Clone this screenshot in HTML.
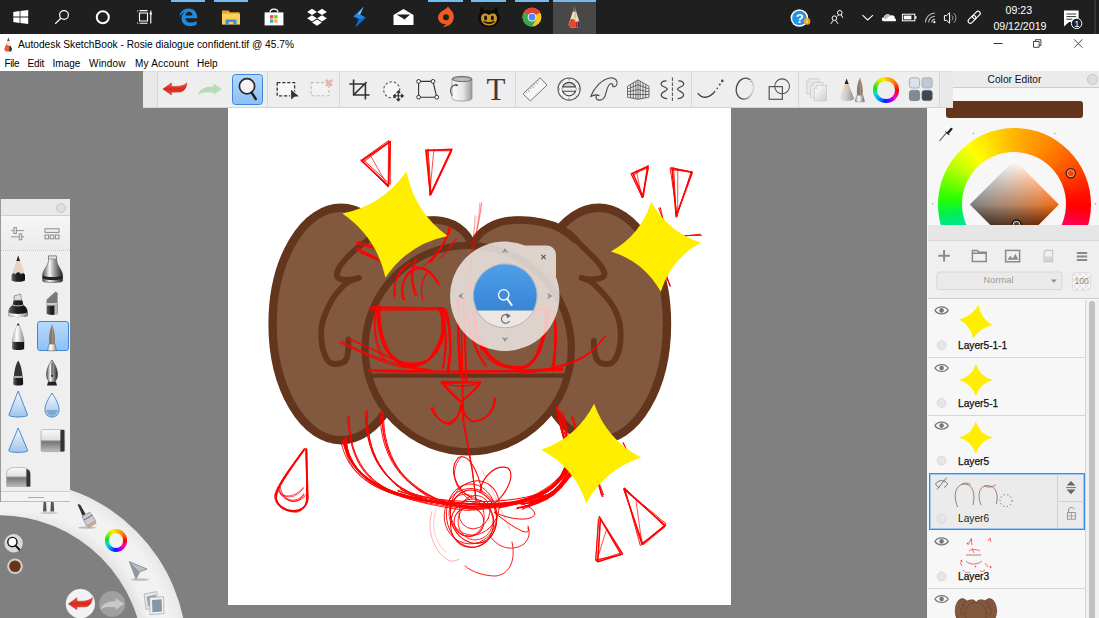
<!DOCTYPE html>
<html>
<head>
<meta charset="utf-8">
<title>Autodesk SketchBook</title>
<style>
*{box-sizing:border-box;margin:0;padding:0}
html,body{width:1099px;height:618px;overflow:hidden;background:#808080;font-family:"Liberation Sans",sans-serif;}
.abs{position:absolute}
svg{position:absolute;overflow:visible}
#taskbar{position:absolute;left:0;top:0;width:1099px;height:34px;background:#1f1f1f;overflow:hidden}
#titlebar{position:absolute;left:0;top:34px;width:1099px;height:20px;background:#fff}
#menubar{position:absolute;left:0;top:54px;width:1099px;height:17px;background:#fff}
.t{position:absolute;white-space:nowrap;color:#000;line-height:1}
.ind{position:absolute;top:0;height:2px;background:#76b9ed}
#toolbar{position:absolute;left:143px;top:71px;width:810px;height:37px;background:#eeeeee;border-bottom:1px solid #d4d4d4;border-top:1px solid #dcdcdc;z-index:5}
.sep{position:absolute;top:0;width:1px;height:35px;background:#d6d6d6}
#canvas{position:absolute;left:228px;top:108px;width:503px;height:497px;background:#fff;overflow:hidden}
#lpanel{position:absolute;left:0;top:199px;width:70px;height:303px;background:#efefef;border-left:1px solid #9a9a9a;z-index:4}
#rpanel{position:absolute;left:927px;top:71px;width:172px;height:547px;background:#f7f7f7;border-left:1px solid #f4f4f4;overflow:hidden}
</style>
</head>
<body>
<!--TASKBAR-->
<div id="taskbar">
<div class="abs" style="left:553px;top:0;width:43px;height:34px;background:#484848"></div>
<div class="ind" style="left:171px;width:34px"></div>
<div class="ind" style="left:214px;width:34px"></div>
<div class="ind" style="left:428px;width:35px"></div>
<div class="ind" style="left:471px;width:35px"></div>
<div class="ind" style="left:515px;width:34px"></div>
<div class="ind" style="left:553px;width:43px"></div>
<svg style="left:0;top:0" width="1099" height="34" viewBox="0 0 1099 34">
<!-- windows -->
<path d="M13.3,12 L19.6,11.1 L19.6,16.6 L13.3,16.6 Z M20.4,11 L28.2,10 L28.2,16.6 L20.4,16.6 Z M13.3,17.4 L19.6,17.4 L19.6,22.9 L13.3,22 Z M20.4,17.4 L28.2,17.4 L28.2,24 L20.4,23 Z" fill="#fff"/>
<!-- search -->
<circle cx="64" cy="15" r="4.4" fill="none" stroke="#fff" stroke-width="1.2"/>
<path d="M60.9,18.3 L55.2,23.7" stroke="#fff" stroke-width="1.2"/>
<!-- cortana -->
<circle cx="102.8" cy="17.2" r="6" fill="none" stroke="#fff" stroke-width="2"/>
<!-- task view -->
<path d="M139.5,13 h8 v8 h-8 z M137,11 h1.2 M137,23 h1.2 M139.5,10.6 h8 M139.5,23.3 h8 M150.8,10.5 v13" fill="none" stroke="#fff" stroke-width="1.1"/>
<circle cx="150.8" cy="13.6" r="1.2" fill="#fff"/>
<!-- edge -->
<path d="M179.5,17.2 C179.8,11.5 184,8.6 188.6,8.6 C194,8.6 197.3,12.4 197.2,18.2 L185.4,18.2 C185.6,21.2 188,22.6 191,22.6 C193,22.6 195,22 196.6,21 L196.6,24.6 C194.8,25.6 192.6,26.2 190,26.2 C184.6,26.2 181.4,22.6 181.6,18 C181.8,15 183.4,12.8 185.6,11.6 C182.6,12.4 180.6,14.6 179.5,17.2 Z M185.5,15.4 L192.4,15.4 C192.4,13.2 191,11.8 189,11.8 C187,11.8 185.8,13.2 185.5,15.4 Z" fill="#1e8be0"/>
<!-- explorer -->
<path d="M222,10.5 h6.5 l1.5,1.8 h9.5 v2.4 h-17.5 z" fill="#e9a822"/>
<rect x="222" y="13.6" width="18" height="11" fill="#fbd05b"/>
<path d="M225.5,24.6 v-5 h11 v5 h-3.2 v-2.6 h-4.6 v2.6 z" fill="#3c8fdd"/>
<!-- store -->
<path d="M270,12.5 C270,8 278,8 278,12.5" fill="none" stroke="#fff" stroke-width="1.2"/>
<rect x="264.6" y="12.4" width="18.8" height="13" fill="#fff"/>
<rect x="270" y="15.2" width="3.3" height="3.3" fill="#e74c2e"/><rect x="274.2" y="15.2" width="3.3" height="3.3" fill="#7cba2b"/>
<rect x="270" y="19.4" width="3.3" height="3.3" fill="#2fa3ea"/><rect x="274.2" y="19.4" width="3.3" height="3.3" fill="#f7b81f"/>
<!-- dropbox -->
<g fill="#fff"><path d="M312,8.8 l4.9,3.1 l-4.9,3.1 l-4.9,-3.1 z M322,8.8 l4.9,3.1 l-4.9,3.1 l-4.9,-3.1 z M312,15.2 l4.9,3.1 l-4.9,3.1 l-4.9,-3.1 z M322,15.2 l4.9,3.1 l-4.9,3.1 l-4.9,-3.1 z M317,19.5 l4.9,3.1 l-4.9,3.1 l-4.9,-3.1 z"/></g>
<!-- blue S -->
<path d="M363.6,6.8 L353.4,16.4 L359,19 L355.4,27.3 L365.6,17.4 L360,14.6 Z" fill="#1f86ea"/>
<path d="M363.6,6.8 L358,14 L360,14.6 Z" fill="#8fd0ff"/>
<path d="M359,19 L365.6,17.4 L355.4,27.3 Z" fill="#1468c8"/>
<!-- mail -->
<path d="M393.5,15 L403.5,9 L413.5,15 L413.5,25 L393.5,25 Z" fill="#fff"/>
<path d="M396.5,14.6 L410,14.6 L404.5,19.6 L410.5,23 Z" fill="#1f1f1f"/>
<!-- origin -->
<path d="M448,6.6 C446.5,9 444,10 441.6,11.4 C438.4,13.2 437.4,17 438.6,20 C439.8,23 443,24.6 446,24 C444.6,25.4 443.6,26.4 442.6,27 C448,27 453.4,23.4 453.8,17.6 C454.2,12.2 450.4,10.2 448,6.6 Z" fill="#f05a22"/>
<circle cx="446" cy="17.2" r="3" fill="#1f1f1f"/>
<!-- bendy -->
<path d="M480.4,12.4 C479,8.6 480.6,7 482.4,7 C483,9.4 484.6,10.4 486,10.4 L492,10.4 C493.4,10.4 495,9.4 495.6,7 C497.4,7 499,8.6 497.6,12.4 C499,14.4 499.6,16.4 499.6,18.4 C499.6,23.6 495.2,26.9 489,26.9 C482.8,26.9 478.4,23.6 478.4,18.4 C478.4,16.4 479,14.4 480.4,12.4 Z" fill="#0d0a07"/>
<path d="M482,15 C484,12.6 487,13.6 489,15 C491,13.6 494,12.6 496,15 C498,18 497,22.6 493,24.8 C490.6,25.8 487.4,25.8 485,24.8 C481,22.6 480,18 482,15 Z" fill="#c9982c"/>
<ellipse cx="485.6" cy="18" rx="1.5" ry="2.4" fill="#1a1206"/><ellipse cx="492.4" cy="18" rx="1.5" ry="2.4" fill="#1a1206"/>
<path d="M483.4,21.6 Q489,25.8 494.6,21.6 Q489,23.6 483.4,21.6 Z" fill="#1a1206" stroke="#1a1206" stroke-width="0.8"/>
<!-- chrome -->
<circle cx="532" cy="17.2" r="9.4" fill="#f7c720"/>
<path d="M532,17.2 L523.9,12.5 A9.4,9.4 0 0 1 540.1,12.5 Z" fill="#e04435"/>
<path d="M532,17.2 L523.9,12.5 A9.4,9.4 0 0 0 532,26.6 L536.2,19.6 Z" fill="#35a853" />
<path d="M523.9,12.5 A9.4,9.4 0 0 1 540.1,12.5 L532,12.5 Z" fill="#e04435"/>
<circle cx="532" cy="17.2" r="4.3" fill="#fff"/><circle cx="532" cy="17.2" r="3.4" fill="#4a8af4"/>
<!-- sketchbook -->
<path d="M574.4,6.6 L580.4,24.4 L578.6,27.4 L570.4,27.4 L568.6,24.4 Z" fill="#f1dfc2"/>
<path d="M574.4,6.6 L576.6,13 L574.4,27.4 Z" fill="#d8c19e"/>
<path d="M574.4,6.6 L576,11.4 L572.8,11.4 Z" fill="#555"/>
<path d="M570.6,19.4 L568.6,24.4 L570.4,27.4 L575.4,27.4 L575.4,21 C574,19 572,18.6 570.6,19.4 Z" fill="#e2482a"/>
<path d="M575.4,22 L577.4,21.4 L577.6,27.4 L575.4,27.4 Z" fill="#b8241c"/>
<path d="M577.6,21 L579.4,21.6 L580.4,24.4 L578.6,27.4 L577.6,27.4 Z" fill="#2e3b4e"/>
<!-- tray -->
<circle cx="799.4" cy="18" r="8.8" fill="#fff"/><circle cx="799.4" cy="18" r="7.3" fill="#2492e6"/>
<text x="795.7" y="22.8" font-family="Liberation Sans" font-weight="bold" font-size="13" fill="#fff">?</text>
<circle cx="807" cy="21.4" r="3.3" fill="#f0a020"/><rect x="806.6" y="19.4" width="0.9" height="0.9" fill="#fff"/><rect x="806.6" y="20.8" width="0.9" height="2.4" fill="#fff"/>
<!-- people -->
<g fill="none" stroke="#fff" stroke-width="1"><circle cx="834.4" cy="18.2" r="2.3"/><path d="M830.8,23.8 L833.2,20.4 M838,23.8 L835.6,20.4"/><circle cx="839.8" cy="12.8" r="2.3"/><path d="M841.2,14.8 L842.8,17.8 M838.4,14.8 L837.4,16.4"/></g>
<!-- chevron -->
<path d="M862.5,15.1 L867.7,19.9 L873,15.1" fill="none" stroke="#fff" stroke-width="1.1"/>
<!-- cloud -->
<path d="M884.5,21.3 C881.2,21.3 881,17.6 884,17.2 C884.4,14.2 888.6,13.2 890.2,15.6 C893,14.4 895.4,16.6 894.8,18.4 C896.6,18.6 896.4,21.3 894.6,21.3 Z" fill="#fff"/>
<path d="M884,17.2 C884.4,14.2 888.6,13.2 890.2,15.6 L885,20 Z" fill="#bdbdbd"/>
<!-- battery -->
<rect x="902.4" y="14.2" width="12.4" height="6.6" fill="none" stroke="#fff" stroke-width="1"/><rect x="903.8" y="15.6" width="7.6" height="3.8" fill="#fff"/><rect x="915.2" y="16" width="1.2" height="3" fill="#fff"/>
<!-- wifi -->
<g fill="none" stroke="#b5b5b5" stroke-width="1.1"><path d="M931.8,22.6 A3.2,3.2 0 0 1 935,19.4"/><path d="M928.6,22.6 A6.4,6.4 0 0 1 935,16.2"/><path d="M925.4,22.6 A9.6,9.6 0 0 1 935,13"/></g>
<circle cx="934.4" cy="22.2" r="1.1" fill="#fff"/>
<!-- volume -->
<path d="M944.4,15.6 h2.2 l3,-2.8 v10.4 l-3,-2.8 h-2.2 z" fill="none" stroke="#fff" stroke-width="1"/>
<path d="M951.8,15.4 A3.4,3.4 0 0 1 951.8,20.6 M953.8,13.2 A6.4,6.4 0 0 1 953.8,22.8" fill="none" stroke="#aaa" stroke-width="0.9"/>
<!-- link -->
<g fill="none" stroke="#fff" stroke-width="1.1" transform="rotate(-45 974.2 17.2)"><rect x="966.6" y="15" width="9" height="4.4" rx="2.2"/><rect x="972.8" y="15" width="9" height="4.4" rx="2.2"/></g>
<!-- notif -->
<path d="M1064,10.6 h14.6 v11.4 h-9.6 l-5,4.4 z" fill="#fff"/>
<path d="M1066.4,14 h9.8 M1066.4,16.6 h9.8 M1066.4,19.2 h6" stroke="#1f1f1f" stroke-width="0.9"/>
<circle cx="1076.6" cy="23.4" r="5.2" fill="#1f1f1f" stroke="#fff" stroke-width="1"/>
<text x="1074.2" y="26.8" font-family="Liberation Sans" font-size="9.4" fill="#fff">1</text>
<rect x="1094.6" y="0" width="1" height="34" fill="#4a4a4a"/>
</svg>
<div class="t" style="left:1005.6px;top:5px;color:#fff;font-size:10.6px">09:23</div>
<div class="t" style="left:993.4px;top:20.6px;color:#fff;font-size:10.6px">09/12/2019</div>
</div>
<!--TITLE-->
<div id="titlebar">
<svg style="left:0;top:0" width="20" height="20" viewBox="0 34 20 20">
<path d="M8.2,37.2 L12,49 L10.8,51.2 L5.4,51.2 L4.2,49 Z" fill="#f3e3c6"/>
<path d="M8.4,37.4 L9.6,41 L7.2,41 Z" fill="#444"/>
<path d="M6.2,44.6 L4.2,49 L5.4,51.4 L8.4,51.4 L8.4,45.2 Z" fill="#e8602a"/>
<path d="M8.4,46 L10.6,46 L12,49 L10.8,51.4 L8.4,51.4 Z" fill="#c42a1c"/>
<path d="M10,45.4 L12,49 L11,51.2 L9.6,51.2 Z" fill="#2e3b4c"/>
</svg>
<div class="t" style="left:18px;top:5.6px;font-size:10.2px">Autodesk SketchBook - Rosie dialogue confident.tif @ 45.7%</div>
<svg style="left:980px;top:0" width="119" height="20" viewBox="980 34 119 20">
<path d="M993.5,43.5 h9" stroke="#333" stroke-width="1"/>
<path d="M1033.5,41.5 h5.6 v5.8 h-5.6 z M1035.3,41.5 v-1.8 h5.6 v5.8 h-1.8" fill="none" stroke="#333" stroke-width="0.9"/>
<path d="M1074.2,39.4 L1082.4,47.7 M1082.4,39.4 L1074.2,47.7" stroke="#333" stroke-width="0.9"/>
</svg>
</div>
<div id="menubar">
<div class="t" style="left:4.4px;top:4.9px;font-size:10px;letter-spacing:-0.3px">File</div>
<div class="t" style="left:27.6px;top:4.9px;font-size:10px;letter-spacing:-0.2px">Edit</div>
<div class="t" style="left:52.6px;top:4.9px;font-size:10px">Image</div>
<div class="t" style="left:89px;top:4.9px;font-size:10px;letter-spacing:0.2px">Window</div>
<div class="t" style="left:135px;top:4.9px;font-size:10px;letter-spacing:0.2px">My Account</div>
<div class="t" style="left:197px;top:4.9px;font-size:10px">Help</div>
</div>
<!--CANVAS-->
<div id="canvas"><svg style="left:0;top:0" width="503" height="497" viewBox="228 108 503 497">
<g fill="#82583f" stroke="#63351c" stroke-width="8.4" stroke-linecap="round" stroke-linejoin="round">
<ellipse cx="341" cy="324" rx="68.4" ry="116.3"/>
<ellipse cx="598.6" cy="324" rx="68.4" ry="116.3"/>
<path stroke="none" d="M352,252 C375,232 405,219 434,219 C452,219 466,228 472.5,245 C478,228 496,219 518,219 C545,219 566,232 584,250 L560,320 L380,320 Z"/>
<path fill="none" stroke-width="5.8" d="M472.5,245 C468,230 452,219.5 434,219.5 C404,219.5 374,233 354.5,250.3 C347,257 338,266 336.7,274 C336,281 348,281 359,278 C352,280 347,282 345.3,284 C338,291 333,297 330.5,302.6 C325,313 321.5,322 321.3,330.3 C321,339 321.5,346 323.8,351.8 C326,360 330,364 334.5,364 C341,364 345.5,362 346.8,358 C348.5,352 348.6,346 348.4,339.5"/>
<path fill="none" stroke-width="5.8" d="M472.5,245 C477,230 496,219.5 518,219.5 C537,219.5 551,223 561.5,228.8 C568,232.5 575,238.5 580,244.2 C586,250 592,255.5 596.9,261 C600.5,265 603.5,269.5 604.5,273.4 C605.5,279 592,281 581.5,278 C587,279.5 591,281.5 593.8,284 C600,290 606,296 610.7,302.6 C616.5,311 620,321 620.5,330.3 C621,339 620.5,346 618.4,351.8 C616,360 612,364 607.6,364 C602,364 598.5,363 596.9,359.5 C594.5,354 593.6,347 593.8,341"/>
<path fill="none" stroke-width="7.6" d="M370,238.6 C390,226 412,220 434,220 C452,220 467,230 472.5,246 C478,230 496,220 518,220 C537,220 551,223.4 561.5,229.2 C566,231.8 571,235.4 575,239.4"/>
<circle cx="468.2" cy="348.6" r="103.2" stroke-width="7.2"/>
<path fill="none" stroke-width="4.2" stroke-linecap="butt" d="M367,375.6 L569.5,375.6"/>
</g>
<g fill="none" stroke="#ff0000" stroke-linecap="round" stroke-linejoin="round">
<path d="M362.1,160.5 L390.2,141.5 L388.5,185.8 L361.8,160.9" stroke-width="1.6" opacity="1.0"/>
<path d="M360.6,160.7 L388.5,140.5 L388.2,187.2 L360.9,159.9" stroke-width="0.9" opacity="1.0"/>
<path d="M362.8,162.5 L390.3,141.6 L390.2,184.4 L363.6,160.1" stroke-width="0.9" opacity="1.0"/>
<path d="M369.9,154.5 L388.1,186.6" stroke-width="0.7" opacity="1.0"/>
<path d="M426.0,150.5 L451.9,149.2 L430.4,194.9 L425.9,150.0" stroke-width="1.6" opacity="1.0"/>
<path d="M427.0,150.1 L451.0,149.7 L430.1,194.7 L427.5,151.1" stroke-width="0.9" opacity="1.0"/>
<path d="M425.5,150.7 L451.8,150.8 L431.1,194.6 L428.1,149.0" stroke-width="0.9" opacity="1.0"/>
<path d="M433.8,150.6 L429.6,195.4" stroke-width="0.7" opacity="1.0"/>
<path d="M632.1,173.6 L647.6,166.4 L643.1,196.8 L632.9,173.5" stroke-width="1.6" opacity="1.0"/>
<path d="M633.0,173.2 L648.5,167.9 L642.5,197.6 L631.1,174.1" stroke-width="0.9" opacity="1.0"/>
<path d="M633.2,175.2 L648.5,165.5 L642.2,197.6 L631.0,173.3" stroke-width="0.9" opacity="1.0"/>
<path d="M636.4,170.5 L641.7,197.5" stroke-width="0.7" opacity="1.0"/>
<path d="M671.6,168.3 L692.2,172.4 L676.2,215.9 L672.1,169.1" stroke-width="1.6" opacity="1.0"/>
<path d="M673.1,169.9 L691.5,171.7 L676.2,217.4 L673.6,167.3" stroke-width="0.9" opacity="1.0"/>
<path d="M670.8,167.6 L691.3,171.9 L677.0,215.1 L670.2,168.3" stroke-width="0.9" opacity="1.0"/>
<path d="M677.8,169.8 L677.6,216.4" stroke-width="0.7" opacity="1.0"/>
<path d="M600.0,518.1 L622.5,553.9 L597.7,561.8 L600.4,518.4" stroke-width="1.6" opacity="1.0"/>
<path d="M599.6,517.6 L620.9,554.9 L595.6,559.9 L599.0,516.8" stroke-width="0.9" opacity="1.0"/>
<path d="M599.4,516.4 L620.5,553.1 L595.8,561.0 L598.3,519.3" stroke-width="0.9" opacity="1.0"/>
<path d="M606.9,528.2 L596.7,561.2" stroke-width="0.7" opacity="1.0"/>
<path d="M624.4,489.1 L665.3,525.6 L642.0,544.0 L624.1,489.1" stroke-width="1.6" opacity="1.0"/>
<path d="M624.0,488.8 L666.1,523.8 L640.3,545.6 L624.7,488.3" stroke-width="0.9" opacity="1.0"/>
<path d="M624.8,487.9 L665.0,526.7 L643.3,544.7 L623.7,489.1" stroke-width="0.9" opacity="1.0"/>
<path d="M636.0,500.8 L642.1,544.6" stroke-width="0.7" opacity="1.0"/>
<path d="M304.3,449.1 C295.4,463.6 279.4,482.4 276.0,495.1 C274.7,505.0 285.8,511.4 295.4,510.7 C302.7,510.2 307.5,504.9 307.5,498.6 L306.5,449.2" stroke-width="1.4" opacity="1.0"/>
<path d="M304.2,449.1 C294.6,462.6 279.1,482.5 276.0,494.8 C275.2,505.4 285.5,512.2 296.5,511.3 C303.3,510.0 306.6,505.3 306.8,498.4 L306.6,449.3" stroke-width="1.4" opacity="1.0"/>
<path d="M304.2,450.8 C295.7,461.9 277.8,480.9 276.9,495.8 C273.9,506.0 287.5,512.5 295.5,511.2 C301.8,508.4 308.5,505.5 307.1,499.4 L305.8,450.6" stroke-width="0.8" opacity="1.0"/>
<path d="M305.5,448.5 C294.2,462.3 278.2,482.3 274.8,494.5 C273.8,506.3 285.5,511.9 296.3,512.3 C302.7,511.3 307.0,505.1 307.1,496.5 L305.8,448.4" stroke-width="0.8" opacity="1.0"/>
<path d="M302.9,450.4 C294.0,462.9 279.7,482.2 275.0,494.9 C275.2,505.9 284.7,512.2 295.2,510.3 C303.9,510.0 307.2,505.8 308.3,497.8 L306.4,449.4" stroke-width="0.8" opacity="1.0"/>
<path d="M279.0,488.6 C281.8,500.1 295.9,507.4 305.6,495.2" stroke-width="0.8" opacity="1.0"/>
<path d="M280.4,487.2 C282.2,501.4 297.1,504.8 303.8,493.8" stroke-width="0.8" opacity="1.0"/>
<path d="M277.6,487.2 C280.6,500.5 296.9,507.3 303.9,494.7" stroke-width="0.8" opacity="1.0"/>
<path d="M278.5,490.9 C285.1,499.4 295.2,499.4 303.7,488.0" stroke-width="0.7" opacity="1.0"/>
<path d="M279.5,493.0 C283.0,497.8 296.0,497.5 303.1,487.5" stroke-width="0.7" opacity="1.0"/>
<path d="M371.7,307.0 L443.2,307.8" stroke-width="1.3" opacity="1.0"/>
<path d="M369.5,308.0 L443.4,308.0" stroke-width="1.3" opacity="1.0"/>
<path d="M369.6,310.1 L443.9,309.5" stroke-width="1.3" opacity="1.0"/>
<path d="M377.2,306.2 C378.1,322.6 380.5,335.3 385.8,348.4 C391.6,357.5 399.3,365.8 411.1,365.8 C423.2,364.1 432.4,358.9 435.1,351.9 C441.3,342.6 443.2,333.7 442.1,325.2 C442.9,317.7 442.1,313.9 439.1,308.3" stroke-width="1.7" opacity="1.0"/>
<path d="M378.1,306.2 C378.2,321.3 380.1,335.4 385.6,347.2 C391.5,357.6 400.0,364.4 410.7,364.4 C423.5,364.0 432.5,359.1 435.4,350.9 C441.9,341.2 444.6,332.9 443.0,325.2 C442.8,318.0 442.4,314.0 439.3,309.7" stroke-width="1.7" opacity="1.0"/>
<path d="M378.4,307.0 C378.8,321.7 380.1,335.3 385.1,348.1 C390.5,357.3 399.2,365.7 411.7,365.7 C423.6,364.5 431.6,358.9 435.3,350.9 C440.5,342.9 444.9,333.1 442.5,325.4 C442.6,317.7 441.0,312.8 439.5,309.0" stroke-width="1.7" opacity="1.0"/>
<path d="M376.4,306.7 C376.4,320.8 378.9,335.5 383.6,345.1 C390.0,356.6 400.4,365.2 412.3,366.2 C425.1,367.0 431.4,358.1 438.5,349.2 C442.2,342.7 441.6,334.7 445.0,325.2 C444.2,319.6 440.1,313.1 439.6,310.7" stroke-width="1.0" opacity="1.0"/>
<path d="M379.6,308.4 C379.4,324.0 382.0,337.0 384.6,345.2 C389.1,357.3 397.9,366.7 411.3,366.1 C424.7,365.9 431.9,356.4 437.5,352.3 C441.0,342.2 444.8,330.7 444.2,323.2 C440.8,316.8 443.2,311.5 440.8,311.5" stroke-width="1.0" opacity="1.0"/>
<path d="M378.0,306.1 C378.9,323.0 382.4,336.6 386.7,345.4 C389.2,356.7 401.3,364.0 411.4,362.9 C421.7,363.8 432.9,360.0 436.9,349.9 C441.1,341.8 443.8,331.0 445.0,322.9 C445.5,320.3 439.5,312.8 441.3,311.4" stroke-width="1.0" opacity="1.0"/>
<path d="M377.7,305.5 C377.5,324.3 379.5,336.4 384.1,347.7 C393.4,356.1 401.7,365.0 413.0,366.5 C422.6,367.1 431.9,356.5 433.4,351.0 C440.7,341.0 442.1,332.2 442.0,326.3 C440.4,319.3 443.8,311.0 441.8,310.1" stroke-width="1.0" opacity="1.0"/>
<path d="M380.1,305.6 C378.3,321.4 383.6,336.5 385.3,347.2 C389.8,355.7 397.9,366.7 409.9,367.7 C422.7,363.8 432.1,357.4 435.3,353.4 C443.0,343.6 444.7,335.1 445.3,324.8 C444.1,315.7 443.2,312.7 440.9,309.8" stroke-width="1.0" opacity="1.0"/>
<path d="M443.1,308.2 C451.7,320.5 451.9,344.4 447.7,373.0" stroke-width="1.4" opacity="1.0"/>
<path d="M445.9,309.0 C450.6,321.2 452.2,344.6 447.2,370.6" stroke-width="1.4" opacity="1.0"/>
<path d="M442.8,311.6 C450.0,320.9 453.6,347.0 448.3,370.6" stroke-width="1.4" opacity="1.0"/>
<path d="M442.8,308.4 C449.4,320.4 451.0,344.0 448.8,373.5" stroke-width="1.4" opacity="1.0"/>
<path d="M440.7,311.7 C445.7,325.1 446.6,344.5 442.7,367.3" stroke-width="1.2" opacity="1.0"/>
<path d="M441.4,310.9 C446.0,325.4 448.1,344.1 443.3,367.2" stroke-width="1.2" opacity="1.0"/>
<path d="M439.7,311.8 C447.4,326.0 448.1,343.6 442.6,368.6" stroke-width="1.2" opacity="1.0"/>
<path d="M376.6,309.9 C373.3,323.0 375.6,346.7 385.3,361.4" stroke-width="0.8" opacity="1.0"/>
<path d="M376.9,309.0 C371.4,323.6 376.1,345.7 385.8,360.9" stroke-width="0.8" opacity="1.0"/>
<path d="M375.6,311.1 C372.8,325.2 374.2,346.1 382.9,361.7" stroke-width="0.8" opacity="1.0"/>
<path d="M458.6,299.2 C455.5,324.0 459.5,350.8 459.4,374.3" stroke-width="1.3" opacity="1.0"/>
<path d="M458.1,300.3 C456.6,323.9 459.4,348.0 460.2,375.8" stroke-width="1.3" opacity="1.0"/>
<path d="M459.8,300.6 C458.5,324.9 457.9,349.0 462.8,376.8" stroke-width="1.3" opacity="1.0"/>
<path d="M457.2,298.1 C457.0,325.7 458.7,349.0 461.7,377.7" stroke-width="1.3" opacity="1.0"/>
<path d="M462.9,294.1 C463.4,319.7 465.7,348.8 467.2,381.0" stroke-width="0.9" opacity="1.0"/>
<path d="M464.0,294.8 C465.9,319.2 466.3,348.9 464.9,381.0" stroke-width="0.9" opacity="1.0"/>
<path d="M463.2,297.8 C464.0,318.7 463.9,349.7 466.7,381.8" stroke-width="0.9" opacity="1.0"/>
<path d="M473.0,311.7 C473.3,327.1 477.1,338.9 483.4,350.2 C493.0,362.9 504.6,369.2 519.3,367.9 C527.2,369.0 535.6,358.9 540.1,350.2 C544.7,337.6 546.2,322.8 546.3,311.0" stroke-width="1.7" opacity="1.0"/>
<path d="M474.9,311.1 C475.1,325.3 477.7,340.8 485.3,350.3 C490.9,361.9 503.7,369.0 517.6,368.0 C529.0,366.9 534.8,360.7 540.3,349.4 C543.9,337.0 548.0,323.4 547.4,312.4" stroke-width="1.7" opacity="1.0"/>
<path d="M473.4,311.5 C475.1,326.3 477.4,340.5 484.1,350.0 C490.8,362.6 505.0,368.3 519.4,367.2 C527.4,367.9 536.1,361.1 539.4,349.9 C544.8,338.0 548.0,323.2 547.5,312.0" stroke-width="1.7" opacity="1.0"/>
<path d="M475.7,313.6 C474.6,325.0 476.9,339.2 486.2,348.0 C490.2,363.5 502.5,365.4 515.5,368.6 C527.0,370.9 537.3,362.9 538.3,348.0 C542.6,338.0 548.3,323.7 545.2,310.9" stroke-width="1.0" opacity="1.0"/>
<path d="M474.5,313.0 C475.5,328.1 479.0,337.7 486.5,349.3 C492.4,361.2 505.4,366.2 516.8,366.8 C525.9,370.3 535.5,359.0 539.1,353.5 C545.0,336.4 548.9,324.9 549.7,309.0" stroke-width="1.0" opacity="1.0"/>
<path d="M473.6,313.9 C476.0,328.5 475.2,338.8 482.2,348.6 C494.8,362.5 506.6,367.2 520.5,368.0 C526.6,369.7 537.7,357.6 540.3,351.2 C543.3,337.2 544.8,322.2 545.3,312.0" stroke-width="1.0" opacity="1.0"/>
<path d="M474.7,310.2 C471.1,325.0 479.1,338.1 483.4,348.7 C493.8,362.3 501.4,365.6 517.7,368.6 C528.8,365.5 533.0,361.2 539.2,349.2 C543.8,340.7 545.9,324.4 545.9,310.9" stroke-width="1.0" opacity="1.0"/>
<path d="M476.0,315.0 C473.2,324.2 479.4,338.2 481.5,352.9 C491.5,363.9 503.4,370.3 518.1,366.3 C525.1,368.3 535.8,362.5 537.2,351.2 C544.2,338.0 544.9,322.7 546.9,314.0" stroke-width="1.0" opacity="1.0"/>
<path d="M476.8,308.7 L550.9,310.1" stroke-width="1.0" opacity="1.0"/>
<path d="M477.1,307.6 L551.3,310.1" stroke-width="1.0" opacity="1.0"/>
<path d="M477.9,307.4 L551.3,308.4" stroke-width="1.0" opacity="1.0"/>
<path d="M554.6,314.5 C557.3,328.6 557.1,348.9 552.6,371.4" stroke-width="1.1" opacity="1.0"/>
<path d="M554.3,312.7 C554.9,329.6 556.1,349.5 551.5,369.0" stroke-width="1.1" opacity="1.0"/>
<path d="M553.9,315.6 C554.2,330.2 557.0,348.2 554.4,368.5" stroke-width="1.1" opacity="1.0"/>
<path d="M553.4,314.2 C556.5,329.2 555.7,350.3 552.7,370.6" stroke-width="1.1" opacity="1.0"/>
<path d="M467.8,317.8 C468.1,335.5 476.0,350.9 487.1,367.1" stroke-width="1.0" opacity="1.0"/>
<path d="M467.8,316.7 C469.9,333.4 474.5,351.7 484.4,365.8" stroke-width="1.0" opacity="1.0"/>
<path d="M468.0,316.2 C470.5,333.3 476.9,353.1 486.0,364.2" stroke-width="1.0" opacity="1.0"/>
<path d="M368.5,369.7 C431.2,371.6 500.9,373.8 562.6,369.8" stroke-width="1.1" opacity="1.0"/>
<path d="M367.7,371.3 C430.0,373.7 501.1,371.6 562.7,370.1" stroke-width="1.1" opacity="1.0"/>
<path d="M367.4,369.6 C430.7,371.6 501.0,371.9 562.8,368.1" stroke-width="1.1" opacity="1.0"/>
<path d="M368.5,371.1 C429.2,371.9 500.0,372.0 560.8,368.2" stroke-width="1.1" opacity="1.0"/>
<path d="M338.6,342.2 C362.7,353.6 383.7,363.1 400.5,367.1 L430.5,370.4" stroke-width="0.8" opacity="1.0"/>
<path d="M341.5,340.7 C362.3,353.5 383.4,364.0 402.5,366.6 L431.2,370.1" stroke-width="0.8" opacity="1.0"/>
<path d="M342.0,340.8 C361.4,353.1 384.8,360.7 403.0,365.2 L431.3,370.0" stroke-width="0.8" opacity="1.0"/>
<path d="M340.6,342.4 C362.3,352.7 384.3,360.0 400.1,365.6 L430.5,370.7" stroke-width="0.8" opacity="1.0"/>
<path d="M350.1,339.6 C368.5,346.9 392.6,358.1 413.0,367.4" stroke-width="0.7" opacity="1.0"/>
<path d="M348.4,337.4 C368.9,348.3 392.4,358.8 415.5,367.9" stroke-width="0.7" opacity="1.0"/>
<path d="M348.5,339.7 C369.0,346.6 390.4,360.6 416.5,369.1" stroke-width="0.7" opacity="1.0"/>
<path d="M605.2,336.4 C593.2,352.5 580.2,359.5 565.1,364.6 C551.6,369.8 534.1,373.5 518.4,372.9" stroke-width="0.9" opacity="1.0"/>
<path d="M605.3,336.3 C593.4,353.0 578.2,360.2 566.2,363.5 C548.9,369.4 535.0,372.5 521.1,371.6" stroke-width="0.9" opacity="1.0"/>
<path d="M604.9,336.5 C593.4,353.4 581.0,360.8 562.8,366.0 C550.9,368.9 535.9,371.8 519.0,371.4" stroke-width="0.9" opacity="1.0"/>
<path d="M604.6,335.5 C594.4,352.9 580.7,361.2 565.4,364.0 C550.2,368.8 536.0,372.1 519.2,373.3" stroke-width="0.9" opacity="1.0"/>
<path d="M395.4,295.2 C393.1,282.5 397.3,269.2 410.7,263.3" stroke-width="1.1" opacity="1.0"/>
<path d="M394.7,295.5 C393.1,283.5 397.2,271.2 410.4,262.6" stroke-width="1.1" opacity="1.0"/>
<path d="M394.5,297.4 C391.9,285.0 398.6,271.1 409.8,262.7" stroke-width="1.1" opacity="1.0"/>
<path d="M404.2,299.4 C399.1,288.4 402.7,275.2 414.9,266.6 C424.8,267.3 433.5,272.9 436.6,282.6" stroke-width="1.1" opacity="1.0"/>
<path d="M404.6,300.4 C400.6,288.7 402.7,274.3 415.6,269.0 C427.0,267.2 432.7,275.1 439.2,285.3" stroke-width="1.1" opacity="1.0"/>
<path d="M402.8,299.1 C398.8,286.6 405.0,274.9 416.4,269.0 C426.4,265.4 432.8,272.8 438.8,283.1" stroke-width="1.1" opacity="1.0"/>
<path d="M415.5,295.8 C410.6,283.3 409.3,272.6 415.6,259.5" stroke-width="1.0" opacity="1.0"/>
<path d="M417.4,296.0 C413.1,284.4 408.6,271.7 415.8,260.8" stroke-width="1.0" opacity="1.0"/>
<path d="M415.5,296.6 C412.1,283.1 411.1,270.8 417.0,259.0" stroke-width="1.0" opacity="1.0"/>
<path d="M422.5,299.1 C420.8,291.4 420.5,280.0 428.0,272.9" stroke-width="0.9" opacity="1.0"/>
<path d="M423.1,300.0 C419.5,291.0 421.3,281.3 427.4,271.1" stroke-width="0.9" opacity="1.0"/>
<path d="M357.1,248.4 L375.8,258.4" stroke-width="1.0" opacity="1.0"/>
<path d="M355.2,249.3 L377.6,258.9" stroke-width="1.0" opacity="1.0"/>
<path d="M356.9,248.0 L376.7,257.7" stroke-width="1.0" opacity="1.0"/>
<path d="M358.2,241.8 L383.2,248.6" stroke-width="1.0" opacity="1.0"/>
<path d="M356.1,242.3 L383.2,250.0" stroke-width="1.0" opacity="1.0"/>
<path d="M356.6,244.2 L381.2,249.9" stroke-width="1.0" opacity="1.0"/>
<path d="M360.1,252.8 L384.8,262.4" stroke-width="0.9" opacity="1.0"/>
<path d="M359.5,251.5 L383.0,263.0" stroke-width="0.9" opacity="1.0"/>
<path d="M430.4,262.6 C439.2,251.9 447.7,240.2 449.1,227.9" stroke-width="1.2" opacity="1.0"/>
<path d="M430.9,261.4 C439.3,251.5 447.5,240.8 449.2,227.2" stroke-width="1.2" opacity="1.0"/>
<path d="M429.4,261.6 C440.1,251.2 446.6,239.3 451.1,228.5" stroke-width="1.2" opacity="1.0"/>
<path d="M423.0,267.1 C435.0,255.7 445.2,246.7 447.6,233.8" stroke-width="0.9" opacity="1.0"/>
<path d="M423.3,266.3 C435.1,255.3 443.7,244.9 446.8,234.7" stroke-width="0.9" opacity="1.0"/>
<path d="M440.5,258.0 C446.3,251.9 451.1,246.2 455.8,238.6" stroke-width="0.9" opacity="1.0"/>
<path d="M441.0,257.8 C446.2,252.6 451.8,245.3 456.5,238.9" stroke-width="0.9" opacity="1.0"/>
<path d="M481.8,203.6 C479.1,225.5 472.4,249.9 467.4,290.4" stroke-width="0.5" opacity="0.7"/>
<path d="M479.8,202.8 C478.8,225.6 472.4,249.3 467.8,289.9" stroke-width="0.5" opacity="0.7"/>
<path d="M481.4,202.7 C478.5,226.3 471.0,250.5 468.8,289.7" stroke-width="0.5" opacity="0.7"/>
<path d="M476.0,216.4 C472.6,240.1 469.0,270.8 471.3,300.1" stroke-width="0.4" opacity="0.6"/>
<path d="M474.8,215.2 C474.1,240.7 470.0,270.4 471.0,300.1" stroke-width="0.4" opacity="0.6"/>
<path d="M441.6,383.1 L480.7,382.4 C475.7,388.6 467.1,397.2 460.7,401.4 C453.5,395.8 444.8,387.8 441.6,382.5" stroke-width="1.3" opacity="1.0"/>
<path d="M441.4,381.4 L480.7,382.6 C477.1,388.1 467.3,396.7 460.7,401.8 C453.1,396.7 446.7,388.3 441.7,382.1" stroke-width="1.3" opacity="1.0"/>
<path d="M441.1,383.1 L481.0,382.3 C476.8,388.8 467.9,395.5 461.1,401.6 C454.8,395.7 446.8,387.4 441.5,381.4" stroke-width="1.3" opacity="1.0"/>
<path d="M443.9,382.4 C449.0,387.4 471.6,386.5 478.6,383.0" stroke-width="0.9" opacity="1.0"/>
<path d="M443.9,383.3 C450.3,386.7 472.9,387.7 478.1,383.7" stroke-width="0.9" opacity="1.0"/>
<path d="M432.4,408.6 C435.3,418.7 444.3,423.0 448.7,423.9 C456.3,420.5 459.2,415.3 460.5,405.6 C462.7,415.3 470.8,422.6 476.3,421.4 C488.2,418.6 494.3,410.8 495.6,398.7" stroke-width="1.4" opacity="1.0"/>
<path d="M431.0,408.4 C436.1,418.5 443.9,424.8 449.8,422.5 C455.5,420.3 460.0,415.1 460.9,404.3 C463.0,416.0 470.1,422.7 476.0,421.3 C487.9,418.1 494.3,410.7 494.7,397.8" stroke-width="1.4" opacity="1.0"/>
<path d="M433.4,406.3 C436.5,418.5 442.1,424.4 450.4,424.7 C455.3,422.9 460.0,415.9 462.6,403.1 C463.9,416.5 469.4,423.4 476.5,420.5 C488.1,419.1 492.8,409.7 494.7,398.2" stroke-width="0.8" opacity="1.0"/>
<path d="M461.7,329.6 L463.7,419.8 L472.4,469.5 L476.0,500.9" stroke-width="1.0" opacity="1.0"/>
<path d="M461.3,330.6 L462.7,419.6 L472.0,470.2 L476.3,500.6" stroke-width="1.0" opacity="1.0"/>
<path d="M343.5,440.5 C350.9,486.1 398.9,499.5 467.8,506.3 C521.0,506.3 558.4,494.7 568.9,465.0" stroke-width="1.5" opacity="1.0"/>
<path d="M344.9,440.3 C350.5,486.2 400.4,499.3 469.4,506.9 C520.6,505.0 557.2,492.9 568.6,465.7" stroke-width="1.5" opacity="1.0"/>
<path d="M345.0,439.7 C350.8,486.7 400.1,499.4 468.5,506.8 C519.6,505.8 558.3,495.0 566.8,464.9" stroke-width="1.5" opacity="1.0"/>
<path d="M341.3,437.3 C352.2,486.5 403.0,499.6 465.5,506.2 C520.7,509.2 561.5,493.8 567.3,461.8" stroke-width="0.9" opacity="1.0"/>
<path d="M345.6,437.9 C347.5,482.5 396.4,501.3 466.3,510.4 C517.0,508.7 555.3,490.5 569.5,462.8" stroke-width="0.9" opacity="1.0"/>
<path d="M346.3,437.7 C346.8,488.0 401.5,502.6 470.7,504.0 C520.9,507.5 557.7,497.1 566.1,468.0" stroke-width="0.9" opacity="1.0"/>
<path d="M346.2,436.5 C346.5,487.1 402.3,497.0 467.6,508.7 C517.6,508.6 557.9,490.8 566.9,465.2" stroke-width="0.9" opacity="1.0"/>
<path d="M344.2,441.3 C347.4,488.1 399.0,501.0 469.9,506.4 C519.2,508.1 561.2,496.0 568.4,463.2" stroke-width="0.9" opacity="1.0"/>
<path d="M341.4,443.4 C351.5,488.4 398.8,500.8 472.4,509.4 C520.7,504.6 557.5,496.8 567.0,466.0" stroke-width="0.9" opacity="1.0"/>
<path d="M345.3,442.9 C352.2,484.4 396.4,498.3 468.4,507.6 C522.3,508.8 554.7,496.4 570.1,467.3" stroke-width="0.9" opacity="1.0"/>
<path d="M345.1,438.4 C352.5,488.2 401.3,503.0 467.9,504.0 C520.4,508.1 555.8,495.8 571.0,462.8" stroke-width="0.9" opacity="1.0"/>
<path d="M349.5,415.8 C348.8,448.7 358.9,483.1 403.3,494.8" stroke-width="0.9" opacity="1.0"/>
<path d="M347.2,416.3 C350.2,448.8 360.4,483.7 403.7,495.1" stroke-width="0.9" opacity="1.0"/>
<path d="M348.9,415.4 C347.6,448.6 358.6,482.9 401.4,495.3" stroke-width="0.9" opacity="1.0"/>
<path d="M365.2,412.1 C364.5,448.0 382.2,485.4 423.3,499.6" stroke-width="1.0" opacity="1.0"/>
<path d="M366.9,410.5 C366.4,449.3 380.1,483.9 422.9,501.2" stroke-width="1.0" opacity="1.0"/>
<path d="M367.2,411.9 C366.3,449.0 381.2,485.7 427.0,500.2" stroke-width="1.0" opacity="1.0"/>
<path d="M367.0,414.0 C364.9,448.0 378.7,484.6 423.2,497.0" stroke-width="1.0" opacity="1.0"/>
<path d="M382.1,411.6 C380.8,447.0 393.8,480.1 442.4,501.5" stroke-width="1.0" opacity="1.0"/>
<path d="M380.1,412.0 C379.9,445.3 392.6,484.0 442.7,501.5" stroke-width="1.0" opacity="1.0"/>
<path d="M381.6,408.5 C383.0,447.2 390.8,480.0 440.9,501.3" stroke-width="1.0" opacity="1.0"/>
<path d="M383.6,411.8 C382.5,443.0 393.3,482.9 442.6,504.1" stroke-width="1.0" opacity="1.0"/>
<path d="M397.8,490.2 C431.3,505.2 500.9,509.0 545.5,495.3" stroke-width="1.0" opacity="1.0"/>
<path d="M398.0,491.1 C428.8,501.1 499.9,508.3 543.7,492.2" stroke-width="1.0" opacity="1.0"/>
<path d="M400.9,489.6 C431.1,501.5 497.7,512.1 543.6,496.2" stroke-width="1.0" opacity="1.0"/>
<path d="M401.8,493.9 C428.2,502.7 498.0,512.1 546.7,494.6" stroke-width="1.0" opacity="1.0"/>
<path d="M499.8,505.2 C531.6,502.9 556.6,490.2 564.6,467.8" stroke-width="1.1" opacity="1.0"/>
<path d="M501.1,506.3 C528.2,504.9 554.8,491.6 564.3,468.9" stroke-width="1.1" opacity="1.0"/>
<path d="M501.7,505.2 C528.3,503.0 555.1,494.0 564.1,472.4" stroke-width="1.1" opacity="1.0"/>
<path d="M497.8,508.0 C530.8,501.6 555.9,490.9 564.8,468.5" stroke-width="1.1" opacity="1.0"/>
<path d="M560.7,415.5 C568.5,432.1 568.0,448.9 569.0,465.8" stroke-width="1.0" opacity="1.0"/>
<path d="M562.5,412.0 C568.4,427.6 571.5,449.2 565.2,465.5" stroke-width="1.0" opacity="1.0"/>
<path d="M563.1,413.1 C564.4,429.7 572.1,448.6 567.4,466.2" stroke-width="1.0" opacity="1.0"/>
<path d="M559.8,414.4 C567.1,428.5 567.9,447.9 567.5,468.0" stroke-width="1.0" opacity="1.0"/>
<path d="M560.3,411.5 C566.6,431.0 571.6,450.4 565.5,465.8" stroke-width="1.0" opacity="1.0"/>
<path d="M572.9,417.6 C578.9,434.2 583.2,455.3 581.4,477.5" stroke-width="0.9" opacity="1.0"/>
<path d="M572.0,416.1 C579.6,435.9 583.5,455.1 578.7,477.3" stroke-width="0.9" opacity="1.0"/>
<path d="M571.5,416.7 C577.5,436.4 580.0,456.1 579.8,476.1" stroke-width="0.9" opacity="1.0"/>
<path d="M517.3,507.5 C547.2,504.6 564.7,491.5 573.2,463.8" stroke-width="1.1" opacity="1.0"/>
<path d="M516.9,508.6 C548.2,502.0 566.1,490.2 574.3,458.6" stroke-width="1.1" opacity="1.0"/>
<path d="M523.3,504.1 C542.8,499.2 564.3,492.2 570.7,459.2" stroke-width="1.1" opacity="1.0"/>
<path d="M521.4,503.9 C541.6,502.7 566.5,490.2 575.4,459.2" stroke-width="1.1" opacity="1.0"/>
<path d="M522.6,507.5 C541.8,499.4 566.0,490.0 572.5,459.4" stroke-width="1.1" opacity="1.0"/>
<path d="M519.3,503.5 C545.6,504.5 563.5,490.5 575.7,459.7" stroke-width="1.1" opacity="1.0"/>
<path d="M522.3,509.1 C544.2,501.4 568.4,490.2 573.3,465.1" stroke-width="1.1" opacity="1.0"/>
<path d="M557.7,407.0 C558.4,427.0 567.6,450.9 573.8,472.5" stroke-width="1.0" opacity="1.0"/>
<path d="M557.9,410.1 C557.3,428.1 570.7,450.6 570.5,469.5" stroke-width="1.0" opacity="1.0"/>
<path d="M556.8,407.2 C560.2,425.4 567.6,448.0 569.1,467.8" stroke-width="1.0" opacity="1.0"/>
<path d="M558.8,409.7 C562.6,428.8 569.9,450.3 574.3,467.2" stroke-width="1.0" opacity="1.0"/>
<path d="M556.8,406.6 C561.1,426.6 568.3,450.5 572.7,468.5" stroke-width="1.0" opacity="1.0"/>
<path d="M556.1,407.6 C562.7,426.7 566.8,448.9 569.7,470.6" stroke-width="1.0" opacity="1.0"/>
<path d="M532.7,503.1 C548.6,497.8 562.2,485.9 567.7,471.8" stroke-width="1.3" opacity="1.0"/>
<path d="M528.8,502.4 C548.7,496.5 559.5,488.3 572.0,474.7" stroke-width="1.3" opacity="1.0"/>
<path d="M530.4,503.9 C548.2,499.3 561.8,488.3 570.7,473.8" stroke-width="1.3" opacity="1.0"/>
<path d="M528.9,501.5 C548.3,498.1 561.3,488.5 567.1,473.1" stroke-width="1.3" opacity="1.0"/>
<ellipse cx="474.6" cy="512.3" rx="15.2" ry="17.1" stroke-width="0.8" transform="rotate(24 475 512)"/>
<ellipse cx="469.0" cy="521.9" rx="14.9" ry="14.5" stroke-width="1.0" transform="rotate(-3 469 522)"/>
<ellipse cx="466.6" cy="515.0" rx="17.4" ry="21.0" stroke-width="0.7" transform="rotate(-14 467 515)"/>
<ellipse cx="475.6" cy="521.3" rx="17.5" ry="18.7" stroke-width="0.8" transform="rotate(9 476 521)"/>
<ellipse cx="472.2" cy="523.3" rx="21.5" ry="24.3" stroke-width="1.0" transform="rotate(12 472 523)"/>
<ellipse cx="473.6" cy="516.6" rx="22.6" ry="27.1" stroke-width="1.1" transform="rotate(-19 474 517)"/>
<ellipse cx="474.7" cy="508.1" rx="23.9" ry="27.6" stroke-width="0.9" transform="rotate(23 475 508)"/>
<ellipse cx="471.7" cy="515.5" rx="25.2" ry="31.7" stroke-width="0.9" transform="rotate(-6 472 516)"/>
<ellipse cx="470.5" cy="516.2" rx="26.3" ry="27.7" stroke-width="0.9" transform="rotate(3 471 516)"/>
<path d="M472,498 C456,490 448,470 458,458 C468,452 478,470 482,492" stroke-width="1.1"/>
<path d="M470,500 C452,488 450,468 462,456" stroke-width="0.8"/>
<path d="M480,492 C482,476 496,464 508,468 C516,476 506,494 494,504" stroke-width="1.1"/>
<path d="M496,506 C514,500 532,504 535,514 C532,522 510,520 494,512 C508,524 532,540 528,528" stroke-width="1.0"/>
<path d="M490,536 C498,548 512,552 524,544 C530,538 530,532 528,526" stroke-width="0.9"/>
<path d="M512,542 C516,560 510,574 496,576 C484,576 472,572 465,566" stroke-width="0.9"/>
<path d="M432,512 C426,530 434,552 448,560 C452,562 456,561 459,559" stroke-width="0.6" opacity="0.55"/>
<path d="M436,510 C430,526 436,544 446,552" stroke-width="0.5" opacity="0.45"/>
<path d="M482,470 C492,490 502,510 510,530" stroke-width="0.5" opacity="0.5"/>
<path d="M684.8,235.6 L701.6,235.3" stroke-width="1.0" opacity="1.0"/>
<path d="M685.0,235.9 L700.4,234.2" stroke-width="1.0" opacity="1.0"/>
<path d="M658.8,208.2 L662.6,218.2" stroke-width="1.0" opacity="1.0"/>
<path d="M660.3,207.6 L663.1,219.7" stroke-width="1.0" opacity="1.0"/>
<path d="M666.7,275.3 L669.8,286.0" stroke-width="1.0" opacity="1.0"/>
<path d="M664.4,274.9 L670.2,285.0" stroke-width="1.0" opacity="1.0"/>
<path d="M666.6,276.7 L670.1,286.2" stroke-width="1.0" opacity="1.0"/>
<path d="M597.1,478.1 L603.5,494.6" stroke-width="1.0" opacity="1.0"/>
<path d="M596.4,478.4 L602.2,496.8" stroke-width="1.0" opacity="1.0"/>
<path d="M597.7,478.1 L601.2,494.5" stroke-width="1.0" opacity="1.0"/>
<path d="M596.6,478.2 L603.1,496.5" stroke-width="1.0" opacity="1.0"/>
<path d="M623.1,443.0 L626.9,450.3" stroke-width="1.0" opacity="1.0"/>
<path d="M623.2,442.6 L627.1,450.8" stroke-width="1.0" opacity="1.0"/>
</g>
<path d="M406.5,171.2 Q414.4,212.0 447.6,235.9 Q408.1,243.9 385.5,277.6 Q376.6,237.2 342.4,213.5 Q382.9,205.2 406.5,171.2 Z" fill="#ffee00"/>
<path d="M651.2,201.7 Q668.0,232.0 700.9,242.6 Q670.9,259.0 660.8,291.7 Q643.9,261.7 610.9,251.4 Q641.0,234.7 651.2,201.7 Z" fill="#ffee00"/>
<path d="M594.1,403.7 Q606.9,439.8 641.3,457.6 Q604.5,469.8 586.2,503.4 Q574.5,467.4 541.1,449.8 Q576.8,437.5 594.1,403.7 Z" fill="#ffee00"/>
<g>
<path d="M450.1,296.3 a54.7,54.7 0 1 1 109.4,0 a54.7,54.7 0 1 1 -109.4,0 Z M518,245.6 H547.2 A8.8,8.8 0 0 1 556,254.4 V282 H518 Z" fill="#f4f3f0" fill-opacity="0.8"/>
<path d="M524,244.8 C532,245.4 540,244.4 548.6,244.6 A8.4,8.4 0 0 1 557,253 V268" fill="none" stroke="#cfc8c2" stroke-width="0.6" opacity="0.0"/>
<circle cx="505.2" cy="295.8" r="32" fill="#fff" fill-opacity="0.45" stroke="#b4aeaa" stroke-width="0.9"/>
<defs><linearGradient id="pb" x1="0" y1="0" x2="0" y2="1"><stop offset="0" stop-color="#4f9fea"/><stop offset="1" stop-color="#2f7bcb"/></linearGradient>
<clipPath id="pc"><rect x="470" y="260" width="72" height="50.4"/></clipPath></defs>
<circle cx="505.2" cy="295.8" r="31.5" fill="url(#pb)" clip-path="url(#pc)"/>
<circle cx="503.7" cy="294.8" r="5.2" fill="none" stroke="#fff" stroke-width="1.3"/>
<path d="M507.3,298.8 L511.6,305" stroke="#fff" stroke-width="2" stroke-linecap="round"/>
<path d="M505,248 L508.2,253 L505,251.8 L501.8,253 Z" fill="#8e9499"/>
<path d="M505,342 L508.2,337 L505,338.2 L501.8,337 Z" fill="#8e9499"/>
<path d="M458,296 L463,292.8 L461.8,296 L463,299.2 Z" fill="#8e9499"/>
<path d="M552.4,296 L547.4,292.8 L548.6,296 L547.4,299.2 Z" fill="#8e9499"/>
<path d="M541.3,254.8 L545.7,259.2 M545.7,254.8 L541.3,259.2" stroke="#555b60" stroke-width="1.2"/>
<path d="M509.5,321 A4.3,4.3 0 1 1 507.8,315.2" fill="none" stroke="#666" stroke-width="1.1"/>
<path d="M506.5,313 L510.8,316 L507,318.2 Z" fill="#666"/>
</g>
</svg></div>
<!--TOOLBAR-->
<div id="toolbar">
<div class="abs" style="left:0;top:0;width:14px;height:35px;background:#e9e9e9"></div><div class="abs" style="left:797px;top:0;width:13px;height:35px;background:#e9e9e9"></div>
<div class="sep" style="left:14px"></div>
<div class="sep" style="left:124px"></div>
<div class="sep" style="left:196px"></div>
<div class="sep" style="left:372px"></div>
<div class="sep" style="left:548px"></div>
<div class="sep" style="left:655px"></div>
<div class="sep" style="left:796px"></div>
<div class="abs" style="left:89px;top:2px;width:31.2px;height:30.6px;border:1px solid #3f86d8;border-radius:3.5px;background:linear-gradient(#b3d6fb,#8cc0f6)"></div>
<svg style="left:0;top:0" width="810" height="36" viewBox="143 72 810 36">
<defs>
<linearGradient id="ur" x1="0" y1="0" x2="0" y2="1"><stop offset="0" stop-color="#ee5a45"/><stop offset="0.5" stop-color="#d8281c"/><stop offset="1" stop-color="#e8503c"/></linearGradient>
<linearGradient id="bk" x1="0" y1="0" x2="1" y2="0"><stop offset="0" stop-color="#fdfdfd"/><stop offset="0.55" stop-color="#e4e4e4"/><stop offset="1" stop-color="#9a9a9a"/></linearGradient>
<linearGradient id="pg" x1="0" y1="0" x2="1" y2="1"><stop offset="0" stop-color="#fff"/><stop offset="1" stop-color="#cfcfcf"/></linearGradient>
</defs>
<!-- undo -->
<path d="M162.9,89.1 L171.4,82.9 L171.4,86.2 C176,86.8 183,86.6 186.9,82.9 C186.5,88 184,91.5 180,92 L171.4,92.2 L171.4,94.9 Z" fill="url(#ur)" stroke="#c2281e" stroke-width="0.5"/>
<!-- redo -->
<path d="M221.8,89.1 L213.4,83.5 L213.4,86.5 C206,86 199.6,89 198.1,94.9 C201,92.6 204,92.2 207,92.2 L213.4,92.5 L213.4,95.1 Z" fill="#b5dcb4"/>
<!-- magnifier -->
<circle cx="247" cy="86.2" r="7.6" fill="#f4f4f4" stroke="#2a2a2a" stroke-width="1.7"/>
<path d="M251.6,92.6 L255.8,99" stroke="#222" stroke-width="2.4" stroke-linecap="round"/>
<!-- select -->
<rect x="277.2" y="82.6" width="17.4" height="13.2" fill="#f8f8f8"/><path d="M277.2,82.6 h17.4 v9 M277.2,82.6 v13.2 h13" fill="none" stroke="#333" stroke-width="1.3" stroke-dasharray="3.2,1.8"/>
<path d="M291,89.8 L298.8,96.2 L294.4,96.8 L291.2,99.6 Z" fill="#333"/>
<!-- deselect -->
<path d="M311.2,82.6 h17.6 v13.2 h-17.6 z" fill="#f2f2f2" stroke="#bdbdbd" stroke-width="1.1" stroke-dasharray="3,2"/>
<path d="M326,79.8 L332,85.8 M332,79.8 L326,85.8" stroke="#f0b0b0" stroke-width="2.6"/>
<!-- crop -->
<path d="M353.6,79.6 V95 H369.6 M349.4,84 H365.4 V99.6 M354,94.6 L366.6,82" fill="none" stroke="#333" stroke-width="1.6"/>
<!-- lasso move -->
<circle cx="391.7" cy="89.8" r="8" fill="#f6f6f6" stroke="#555" stroke-width="1.1" stroke-dasharray="2.4,2"/>
<path d="M398.4,91.4 v9 M393.9,95.9 h9 M398.4,90.6 l-1.7,2.2 h3.4 z M398.4,101.2 l-1.7,-2.2 h3.4 z M393.1,95.9 l2.2,-1.7 v3.4 z M403.7,95.9 l-2.2,-1.7 v3.4 z" fill="#333" stroke="#333" stroke-width="1"/>
<!-- distort -->
<path d="M418.6,81.4 L433,81.4 L436.7,97.2 L418.6,97.2 Z" fill="none" stroke="#333" stroke-width="1.1"/>
<g fill="#fff" stroke="#333" stroke-width="1"><circle cx="418.6" cy="81.4" r="1.9"/><circle cx="433" cy="81.4" r="1.9"/><circle cx="436.7" cy="97.2" r="1.9"/><circle cx="418.6" cy="97.2" r="1.9"/></g>
<!-- bucket -->
<path d="M452,79 V98.2 C452,102 472,102 472,98.2 V79 Z" fill="url(#bk)" stroke="#8a8a8a" stroke-width="0.7"/>
<ellipse cx="462" cy="79" rx="10" ry="2.6" fill="#9a9a9a" stroke="#666" stroke-width="0.9"/>
<ellipse cx="462" cy="79.4" rx="8" ry="1.6" fill="#bdbdbd"/>
<path d="M457.5,85 C451,84 448.6,91 452.4,95.6" fill="none" stroke="#555" stroke-width="1.1"/>
<path d="M455.6,83.6 L458.4,85.4 L455.6,86.6 Z" fill="#555"/>
<!-- T -->
<text x="486.4" y="100" font-family="Liberation Serif" font-size="31" fill="#3c3c3c">T</text>
<!-- ruler -->
<path d="M523,93.8 L540.1,77.8 L547,85 L530.3,101 Z" fill="#f6f6f6" stroke="#777" stroke-width="1"/>
<path d="M525.6,91.4 l1.4,1.5 M527.6,89.5 l2.2,2.4 M529.6,87.6 l1.4,1.5 M531.6,85.8 l2.2,2.4 M533.6,83.9 l1.4,1.5 M535.6,82 l2.2,2.4 M537.6,80.2 l1.4,1.5" stroke="#777" stroke-width="0.7"/>
<!-- ellipse guide -->
<defs><linearGradient id="eg" x1="0" y1="0" x2="0" y2="1"><stop offset="0" stop-color="#c8c8c8"/><stop offset="1" stop-color="#fafafa"/></linearGradient></defs>
<circle cx="569.1" cy="89.1" r="11.1" fill="#f4f4f4" stroke="#5a5a5a" stroke-width="1.1"/>
<circle cx="569.1" cy="89.1" r="6.8" fill="url(#eg)" stroke="#4a4a4a" stroke-width="1.2"/>
<rect x="562.4" y="87.2" width="13.4" height="3.6" fill="#f2f2f2"/>
<path d="M562.3,86.9 h13.6 M562.3,91.2 h13.6" stroke="#4a4a4a" stroke-width="1.1"/>
<path d="M569.1,78 v2.4 M569.1,97.8 v2.4 M558,89.1 h2 M578.2,89.1 h2 M561.2,81.2 l1.2,1.2 M577,81.2 l-1.2,1.2 M561.2,97 l1.2,-1.2 M577,97 l-1.2,-1.2" stroke="#6a6a6a" stroke-width="0.8"/>
<!-- french curve -->
<path d="M590.6,96.6 C594,88 602,79 610,78 C615,77.4 618,80.6 617,84 C616.4,86.6 614,87.4 612.6,86 C613.6,83.6 611,82.6 609,85 C605.6,89.6 606.6,95.6 603.4,98.6 C600.6,101 596.6,100.6 596,97.6 C595.6,95.6 597.6,94.6 599,95.6 C596,94.2 592.6,95.4 590.6,96.6 Z" fill="#eaeaea" stroke="#4a4a4a" stroke-width="1.1" stroke-linejoin="round"/>
<!-- perspective -->
<path d="M627.5,86.3 L638,79.9 L649,86.3 V97.2 L638,99.3 L627.5,97.2 Z M638,79.9 V99.3 M627.5,89.0 L638,84.8 L649,89.0 M627.5,91.8 L638,89.6 L649,91.8 M627.5,94.5 L638,94.5 L649,94.5 M630.6,84.4 V97.8 M633.3,82.8 V98.4 M635.9,81.2 V98.9 M645.7,84.4 V97.8 M643.0,82.8 V98.4 M640.2,81.2 V98.9" fill="none" stroke="#555" stroke-width="0.85"/>
<!-- symmetry -->
<path d="M672.4,77.5 v24" stroke="#444" stroke-width="1" stroke-dasharray="3.4,1.6"/>
<path d="M666,80.9 C662.6,81 660.6,82.6 661.2,84.6 C662,87 666.6,87 667.4,89.1 C666.6,91.4 661.6,91.6 661.2,94.5 C661,96.8 663.4,98.4 666.7,98.6 M678.8,80.9 C682.2,81 684.2,82.6 683.6,84.6 C682.8,87 678.2,87 677.4,89.1 C678.2,91.4 683.2,91.6 683.6,94.5 C683.8,96.8 681.4,98.4 678.1,98.6" fill="none" stroke="#444" stroke-width="1.25" stroke-linecap="round"/>
<!-- steady stroke -->
<path d="M698.2,93.6 C700.6,96.6 703,97.4 705.6,97.2 C709.6,96.8 712.6,94.6 714.8,91.4" fill="none" stroke="#444" stroke-width="1.4" stroke-linecap="round"/>
<circle cx="717.3" cy="88.4" r="0.8" fill="#444"/><circle cx="719.8" cy="84.6" r="1" fill="#444"/><circle cx="722.3" cy="80.9" r="1.3" fill="#444"/>
<!-- ellipse predict -->
<defs><linearGradient id="ep" x1="0" y1="0" x2="1" y2="0"><stop offset="0" stop-color="#444"/><stop offset="0.55" stop-color="#555"/><stop offset="1" stop-color="#bbb"/></linearGradient></defs>
<ellipse cx="744.9" cy="88.6" rx="8.6" ry="10.6" fill="none" stroke="url(#ep)" stroke-width="1.3" transform="rotate(14 744.9 88.6)"/>
<path d="M750.6,80 C754.6,84 755,93 750.6,98" fill="none" stroke="#eeeeee" stroke-width="2.2" stroke-dasharray="1.2,1.4"/>
<!-- shapes -->
<circle cx="782.1" cy="86.3" r="7.4" fill="none" stroke="#555" stroke-width="1.1"/>
<rect x="769.2" y="86.6" width="13.2" height="12.7" fill="none" stroke="#555" stroke-width="1.2"/>
<!-- layers -->
<g stroke="#c4c4c4" stroke-width="0.7"><path d="M809.6,78.8 h9.4 v15 h-12.3 v-12 z" fill="#e9e9e9"/><path d="M813.4,82.4 h9.6 v15.2 h-12.4 v-12.2 z" fill="#ececec"/><path d="M817,85.4 h9.5 v15.6 h-12.3 v-12.6 z" fill="url(#pg)"/><path d="M817,85.4 v3 h-2.8 z M813.4,82.4 v3 h-2.8 z M809.6,78.8 v3 h-2.9 z" fill="#fafafa"/></g>
<!-- brushes -->
<defs><linearGradient id="pn" x1="0" y1="0" x2="1" y2="0"><stop offset="0" stop-color="#e8e8e8"/><stop offset="0.5" stop-color="#c9c9c9"/><stop offset="1" stop-color="#8f8f8f"/></linearGradient>
<linearGradient id="pw" x1="0" y1="0" x2="1" y2="0"><stop offset="0" stop-color="#f2e6da"/><stop offset="0.6" stop-color="#d9c3b0"/><stop offset="1" stop-color="#a98f7c"/></linearGradient>
<linearGradient id="fe" x1="0" y1="0" x2="1" y2="0"><stop offset="0" stop-color="#888"/><stop offset="0.4" stop-color="#fff"/><stop offset="1" stop-color="#666"/></linearGradient></defs>
<path d="M846.6,78.4 L853.8,98.6 C853.8,101.6 839.6,101.6 839.6,98.6 Z" fill="url(#pw)"/>
<path d="M846.6,78.4 L848.6,84 L844.6,84 Z" fill="#222"/>
<path d="M842,92 C843,90.6 844.6,90.6 845.2,92.2 C846,90.2 848.4,90.2 849,92.2 C849.8,90.8 851,90.8 851.6,92.4 L853.8,98.6 C853.8,101.6 839.6,101.6 839.6,98.6 Z" fill="url(#pn)"/>
<path d="M859.8,78 C862.4,83 863.2,90 862.6,95.6 L857,95.6 C856.4,90 857.2,83 859.8,78 Z" fill="#8f7a6c"/>
<path d="M859.8,78 C860.6,84 860.8,90 860.4,95.6" stroke="#b5a497" stroke-width="0.7" fill="none"/>
<path d="M856.6,95.4 h6.4 l1.6,6 c-2,0.8 -7.6,0.8 -9.6,0 z" fill="url(#fe)" stroke="#777" stroke-width="0.4"/>
<!-- 4 squares -->
<rect x="909.4" y="77.8" width="10.2" height="10.2" rx="2.4" fill="#dbe3ea" stroke="#9aa0a6" stroke-width="0.8"/>
<rect x="922" y="77.8" width="10.2" height="10.2" rx="2.4" fill="#bccad8" stroke="#9aa4ae" stroke-width="0.7"/>
<rect x="909.4" y="90.4" width="10.2" height="10.2" rx="2.4" fill="#7f8a95" stroke="#6a737c" stroke-width="0.7"/>
<rect x="922" y="90.4" width="10.2" height="10.2" rx="2.4" fill="#3e4852" stroke="#5a626a" stroke-width="0.7"/>
</svg>
<div class="abs" style="left:730.3px;top:5.3px;width:25.4px;height:25.4px;border-radius:50%;background:conic-gradient(#ffc800 0deg,#ff8000 45deg,#ff0000 90deg,#ff00c0 130deg,#8000ff 160deg,#0020ff 185deg,#00a0ff 220deg,#00e0c0 250deg,#20e020 280deg,#c0f000 320deg,#ffee00 345deg,#ffc800 360deg)"></div>
<div class="abs" style="left:734.3px;top:9.3px;width:17.4px;height:17.4px;border-radius:50%;background:#eeeeee"></div>
</div>
<!--LPANEL-->
<div id="lpanel">
<div class="abs" style="left:0;top:0;width:69px;height:17px;background:#e9e9e9;border-bottom:1px solid #cfcfcf"></div>
<div class="abs" style="left:55px;top:4px;width:10.4px;height:10.4px;border-radius:50%;background:#dedede;border:1px solid #c8c8c8"></div>
<div class="abs" style="left:0;top:17px;width:69px;height:35px;background:linear-gradient(#f6f6f6,#ebebeb);border-bottom:1px dotted #c4c4c4"></div>
<div class="abs" style="left:0;top:292px;width:69px;height:1px;background:#cfcfcf"></div>
<div class="abs" style="left:0;top:293px;width:69px;height:10px;background:#f3f3f3;border-bottom:1px solid #bdbdbd"></div>
<div class="abs" style="left:27px;top:298px;width:15.6px;height:1px;background:#aaa"></div>
<div class="abs" style="left:36px;top:121.6px;width:31.6px;height:30.6px;border:1px solid #3f86d8;border-radius:3px;background:linear-gradient(#b7d9fb,#8fc2f6)"></div>
<svg style="left:-1px;top:0" width="70" height="303" viewBox="0 199 70 303">
<defs>
<linearGradient id="mt" x1="0" y1="0" x2="1" y2="0"><stop offset="0" stop-color="#555"/><stop offset="0.35" stop-color="#f4f4f4"/><stop offset="0.6" stop-color="#999"/><stop offset="1" stop-color="#222"/></linearGradient>
<linearGradient id="mt2" x1="0" y1="0" x2="1" y2="0"><stop offset="0" stop-color="#bbb"/><stop offset="0.4" stop-color="#fff"/><stop offset="1" stop-color="#888"/></linearGradient>
<linearGradient id="dk" x1="0" y1="0" x2="1" y2="0"><stop offset="0" stop-color="#666"/><stop offset="0.4" stop-color="#222"/><stop offset="1" stop-color="#111"/></linearGradient>
<linearGradient id="bl" x1="0" y1="0" x2="0" y2="1"><stop offset="0" stop-color="#f4f9ff"/><stop offset="1" stop-color="#9fc4ea"/></linearGradient>
<linearGradient id="er" x1="0" y1="0" x2="0" y2="1"><stop offset="0" stop-color="#fafafa"/><stop offset="0.45" stop-color="#e0e0e0"/><stop offset="0.55" stop-color="#777"/><stop offset="1" stop-color="#bbb"/></linearGradient>
</defs>
<!-- sliders icon -->
<g stroke="#949494" stroke-width="1" fill="#e4e4e4"><path d="M11,230.6 h13 M11,236.8 h13"/><rect x="13.9" y="227.6" width="2.5" height="6"/><rect x="19.3" y="233.8" width="2.5" height="6"/></g>
<!-- grid icon -->
<g stroke="#8a8a8a" stroke-width="1" fill="none"><rect x="45" y="228.8" width="14" height="3.6"/><rect x="45" y="235" width="3.6" height="3.8"/><rect x="50.2" y="235" width="3.6" height="3.8"/><rect x="55.4" y="235" width="3.6" height="3.8"/></g>
<!-- row1: pencil -->
<path d="M18.2,255.6 L25,275 L25,280 C25,282.4 11.6,282.4 11.6,280 L11.6,275 Z" fill="#e8d3c2"/>
<path d="M18.2,255.6 L20,261 L16.4,261 Z" fill="#222"/>
<path d="M11.6,275 C13,272.6 15,272.6 15.6,274.6 C16.6,271.6 20,271.6 21,274.6 C22,272.6 24,272.6 25,275 L25,280 C25,282.4 11.6,282.4 11.6,280 Z" fill="url(#dk)"/>
<!-- row1: airbrush -->
<path d="M48.6,256 h8 v4 C57,266 62.6,270 62.6,275 V281 C62.6,283 42.6,283 42.6,281 V275 C42.6,270 48.2,266 48.6,260 Z" fill="url(#mt)" stroke="#444" stroke-width="0.5"/>
<path d="M42.6,275.6 C48,277.6 57,277.6 62.6,275.6 V278.4 C57,280.4 48,280.4 42.6,278.4 Z" fill="#222"/>
<rect x="48.6" y="256" width="8" height="3" fill="#ddd" stroke="#555" stroke-width="0.4"/>
<!-- row2: marker -->
<path d="M14,296 L20.6,294 L21.6,300.4 H14 Z" fill="#ddd" stroke="#555" stroke-width="0.5"/>
<path d="M13.6,300.4 H22.4 L23.4,305 C26.4,307 27.6,309 27.6,312 V315.6 C27.6,317.8 8.4,317.8 8.4,315.6 V312 C8.4,309 9.6,307 12.6,305 Z" fill="url(#dk)"/>
<path d="M8.4,312.6 C13,314.4 23,314.4 27.6,312.6 V315.6 C27.6,317.8 8.4,317.8 8.4,315.6 Z" fill="url(#mt2)"/>
<path d="M12.6,305 C16,306.2 20,306.2 23.4,305" stroke="#eee" stroke-width="0.8" fill="none"/>
<!-- row2: chisel -->
<path d="M46.6,299.6 L55.6,291.4 L57.6,293 V303 H46.6 Z" fill="#7a7a7a"/>
<path d="M46.6,303 H57.6 V313.6 C57.6,315.4 46.6,315.4 46.6,313.6 Z" fill="url(#dk)"/>
<path d="M46.6,303 H57.6 V305.6 H46.6 Z" fill="#ccc"/>
<path d="M54.4,305.6 h3.2 v8 c0,1 -3.2,1.6 -3.2,1.6 z" fill="#bbb"/>
<!-- row3: ballpoint -->
<path d="M18.2,323.6 C20,325 24.2,338 24.2,342 H12.2 C12.2,338 16.4,325 18.2,323.6 Z" fill="url(#mt2)" stroke="#888" stroke-width="0.4"/>
<circle cx="18.2" cy="324.6" r="1.1" fill="#333"/>
<path d="M12.2,342 H24.2 V348.6 C24.2,350.6 12.2,350.6 12.2,348.6 Z" fill="url(#dk)"/>
<!-- row3: brush (selected) -->
<path d="M52,324.4 C54.6,330 55.4,338 54.8,344 H49.2 C48.6,338 49.4,330 52,324.4 Z" fill="#8d7667"/><path d="M52,326 C52.8,332 53,338 52.8,344" stroke="#b9a79a" stroke-width="0.7" fill="none"/>
<path d="M49,344 H55 L56.6,350.8 H47.4 Z" fill="url(#mt2)" stroke="#666" stroke-width="0.5"/>
<!-- row4: felt tip -->
<path d="M18.2,360.6 C20.6,364 22.4,372 22.4,376 H14 C14,372 15.8,364 18.2,360.6 Z" fill="#333"/>
<path d="M13.6,376 H22.8 L23.2,384 C23.2,386 13.2,386 13.2,384 Z" fill="url(#dk)"/>
<path d="M13.6,376 H22.8 V378 H13.6 Z" fill="#aaa"/>
<!-- row4: nib -->
<path d="M52,360 C56,366 58.6,372 57,378 L55,382 H49 L47,378 C45.4,372 48,366 52,360 Z" fill="url(#mt)" stroke="#333" stroke-width="0.6"/>
<path d="M52,363 V376" stroke="#222" stroke-width="0.8"/><circle cx="52" cy="376" r="1" fill="#222"/>
<path d="M48,382 H56 L57,385.6 H47 Z" fill="#222"/>
<!-- row5 -->
<path d="M18.2,391 L27.6,415 C27.6,417.6 8.8,417.6 8.8,415 Z" fill="url(#bl)" stroke="#3d7fc4" stroke-width="0.9"/>
<path d="M52,393 C55.6,399 59,404 59,409.6 C59,414 56,417 52,417 C48,417 45,414 45,409.6 C45,404 48.4,399 52,393 Z" fill="url(#bl)" stroke="#3d7fc4" stroke-width="0.9"/>
<path d="M46.6,410 C47,414 50,415.6 52,415.6 C54,415.6 57,414 57.4,410 Z" fill="#7fa6cf"/>
<!-- row6 -->
<path d="M18.2,428 L27.8,450.6 C27.8,453 8.6,453 8.6,450.6 Z" fill="url(#bl)" stroke="#3d7fc4" stroke-width="0.9"/>
<rect x="41" y="429.6" width="23.6" height="22" rx="1.6" fill="url(#er)" stroke="#999" stroke-width="0.6"/>
<rect x="60.4" y="430" width="4" height="21.4" fill="#333"/>
<!-- row7 -->
<path d="M6.6,474 C6.6,468.6 10,467.4 18.4,467.4 C26.8,467.4 30.2,468.6 30.2,474 V486.4 H6.6 Z" fill="url(#er)" stroke="#999" stroke-width="0.6"/>
<path d="M26.4,469 C29.4,470 30.2,471.6 30.2,474 V486.4 H26.4 Z" fill="#333"/>
</svg>
</div>
<!--LAGOON-->
<svg style="left:0;top:478px;z-index:3" width="200" height="140" viewBox="0 478 200 140">
<defs>
<radialGradient id="lg" cx="10" cy="655" r="176" gradientUnits="userSpaceOnUse"><stop offset="0.76" stop-color="#e4e4e4"/><stop offset="0.82" stop-color="#f1f1f1"/><stop offset="0.93" stop-color="#f2f2f2"/><stop offset="1" stop-color="#e8e8e8"/></radialGradient>
<linearGradient id="ur2" x1="0" y1="0" x2="0" y2="1"><stop offset="0" stop-color="#ee5a45"/><stop offset="0.5" stop-color="#d8281c"/><stop offset="1" stop-color="#e8503c"/></linearGradient>
<clipPath id="lc"><rect x="0" y="478" width="200" height="140"/></clipPath>
</defs>
<g clip-path="url(#lc)">
<path fill-rule="evenodd" fill="url(#lg)" d="M-161,654 a174,174 0 1 0 348,0 a174,174 0 1 0 -348,0 Z M-146.1,660.2 a144.9,144.9 0 1 0 289.8,0 a144.9,144.9 0 1 0 -289.8,0 Z"/>
<!-- stand -->
<path d="M43.6,501 h2.4 l0.6,10.6 h-3.6 z M51,501 h2.6 l0.6,10.6 h-3.8 z" fill="#555"/>
<ellipse cx="49" cy="513" rx="9" ry="1.2" fill="#bbb" opacity="0.7"/>
<!-- brush -->
<path d="M77.6,504.6 C79,503.6 80.6,504.6 81,506 L85.6,514 L82.6,516 Z" fill="#333"/>
<path d="M82,516.6 L89.6,512 L95.6,520.6 L86.6,526 Z" fill="#c9cdd2" stroke="#777" stroke-width="0.6"/>
<path d="M84,520 L92.6,515" stroke="#666" stroke-width="1"/>
<path d="M86.6,526 L95.6,520.6 L96.6,523.4 L88.6,528 Z" fill="#c8a98c"/>
<ellipse cx="87" cy="527.6" rx="9" ry="1.2" fill="#999" opacity="0.6"/>
<!-- arrow cursor -->
<path d="M129.4,561.6 L147,569 L139.6,572 L136,579 Z" fill="#b9c0c8" stroke="#777" stroke-width="0.7"/>
<path d="M129.4,561.6 L139.6,572 L136,579 Z" fill="#8e98a3"/>
<ellipse cx="140" cy="579.6" rx="9" ry="1.1" fill="#999" opacity="0.6"/>
<!-- layers -->
<path d="M144,594 L156.6,591.6 L158.6,607 L146,609.4 Z" fill="#e8e8e8" stroke="#999" stroke-width="0.6"/>
<path d="M146.6,596.4 L155.6,594.6 L157,604.6 L148,606.4 Z" fill="#9aa7b5"/>
<path d="M149.6,597.6 L163.6,596.6 L164,613.6 L150,614.6 Z" fill="#f1f1f1" stroke="#999" stroke-width="0.6"/>
<path d="M152,600 L161.6,599.2 L162,611.4 L152.4,612.2 Z" fill="#8796a6"/>
<!-- zoom button -->
<circle cx="13.6" cy="543.2" r="9.2" fill="#dadada"/>
<circle cx="12.4" cy="542" r="4.6" fill="#fff" stroke="#111" stroke-width="1.4"/>
<path d="M15.6,545.6 L19.4,549.6" stroke="#111" stroke-width="2" stroke-linecap="round"/>
<!-- color button -->
<circle cx="15" cy="566.3" r="7.8" fill="#cfcfcf"/>
<circle cx="15" cy="566.3" r="5.8" fill="#6a3516"/>
<!-- undo -->
<circle cx="80.4" cy="603.7" r="14.6" fill="#f2f2f2"/>
<path transform="translate(-94.5,514.8)" d="M162.9,89.1 L171.4,82.9 L171.4,86.2 C176,86.8 183,86.6 186.9,82.9 C186.5,88 184,91.5 180,92 L171.4,92.2 L171.4,94.9 Z" fill="url(#ur2)" stroke="#c2281e" stroke-width="0.5"/>
<!-- redo -->
<circle cx="112.2" cy="603.9" r="13" fill="#a0a0a0"/>
<path transform="translate(-97.7,514.7)" d="M221.8,89.1 L213.4,83.5 L213.4,86.5 C206,86 199.6,89 198.1,94.9 C201,92.6 204,92.2 207,92.2 L213.4,92.5 L213.4,95.1 Z" fill="#c9c9c9"/>
</g>
</svg>
<div class="abs" style="left:104.7px;top:529px;width:22.6px;height:22.6px;border-radius:50%;z-index:3;background:conic-gradient(#ffc800 0deg,#ff8000 45deg,#ff0000 90deg,#ff00c0 130deg,#8000ff 160deg,#0020ff 185deg,#00a0ff 220deg,#00e0c0 250deg,#20e020 280deg,#c0f000 320deg,#ffee00 345deg,#ffc800 360deg)"></div>
<div class="abs" style="left:108.7px;top:533.1px;width:14.6px;height:14.6px;border-radius:50%;z-index:3;background:#f2f2f2"></div>
<!--RPANEL-->
<div id="rpanel">
<!-- coordinates inside rpanel: x = pageX-928 (border 1px) , y = pageY-71 -->
<div class="abs" style="left:0;top:0;width:171px;height:17px;background:#ebebeb;border-bottom:1px solid #cdcdcd"></div>
<div class="t" style="left:59.6px;top:3.6px;font-size:10.2px;color:#111">Color Editor</div>
<div class="abs" style="left:159px;top:3px;width:10.6px;height:10.6px;border-radius:50%;background:#dedede;border:1px solid #c6c6c6"></div>
<div class="abs" style="left:17.6px;top:29.6px;width:137.4px;height:17.2px;border-radius:3px;background:#63351b"></div>
<!-- wheel -->
<div class="abs" style="left:10px;top:57px;width:152.8px;height:152.8px;border-radius:50%;background:conic-gradient(#ffb400 0deg,#ff8c00 25deg,#ff6a00 45deg,#ff3c00 65deg,#ff1400 80deg,#ff0000 92deg,#ff0040 105deg,#ff0080 120deg,#00c8c8 235deg,#00e696 250deg,#00f050 262deg,#28ff00 275deg,#78ff00 290deg,#c8ff00 305deg,#ffff00 322deg,#ffdc00 340deg,#ffb400 360deg)"></div>
<div class="abs" style="left:34.4px;top:81.4px;width:104px;height:104px;border-radius:50%;background:#f7f7f7"></div>
<div class="abs" style="left:55px;top:102px;width:62.8px;height:62.8px;transform:rotate(45deg);background:linear-gradient(135deg,rgba(0,0,0,0) 50%,rgba(0,0,0,0.95) 100%),linear-gradient(to bottom,rgba(0,0,0,0),rgba(0,0,0,0.5)),linear-gradient(to right,#ffffff,#f26a12)"></div>
<svg style="left:0;top:0" width="171" height="160" viewBox="928 71 171 160">
<circle cx="1070.8" cy="173.3" r="4.6" fill="none" stroke="#222" stroke-width="1.2"/>
<circle cx="1070.8" cy="173.3" r="3.5" fill="none" stroke="#e8c8b0" stroke-width="0.7"/>
<circle cx="1016.5" cy="224.6" r="4.6" fill="none" stroke="#111" stroke-width="1.3"/>
<circle cx="1016.5" cy="224.6" r="3.3" fill="none" stroke="#eee" stroke-width="0.9"/>
<g fill="#9a9a9a"><circle cx="973.4" cy="133.5" r="0.7"/><circle cx="1055" cy="133.5" r="0.7"/><circle cx="932.6" cy="203.8" r="0.7"/><circle cx="1095.4" cy="203.8" r="0.7"/></g>
<!-- eyedropper -->
<path d="M939.8,140.6 L946.6,132.6" stroke="#6a6a6a" stroke-width="1.1" stroke-linecap="round"/>
<path d="M946.4,133 L950.4,128.2 C951.6,126.8 953.4,128.2 952.2,129.8 L948.2,134.6 Z" fill="#222"/>
<path d="M945.8,131.8 L949,134.6" stroke="#333" stroke-width="1.1" stroke-linecap="round"/>
</svg>
<!-- band -->
<div class="abs" style="left:0;top:153.6px;width:171px;height:16px;background:#e6e6e6;border-bottom:1px solid #d8d8d8"></div>
<div class="abs" style="left:0;top:169.6px;width:171px;height:58.4px;background:#efefef;border-bottom:1px solid #cfcfcf"></div>
<svg style="left:0;top:170px" width="171" height="58" viewBox="928 241 171 58">
<path d="M938.4,255.8 h11.4 M944.1,250.1 v11.4" stroke="#8a8a8a" stroke-width="2"/>
<path d="M972.4,261.6 v-11 h5 l1.2,1.6 h7.6 v9.4 z M972.4,253.2 h13.8" fill="none" stroke="#8a8a8a" stroke-width="1.5"/>
<rect x="1005.6" y="250.4" width="14" height="11.4" fill="none" stroke="#8a8a8a" stroke-width="1.5"/>
<path d="M1007.4,259.8 l3,-4 l2.4,2.6 l2.6,-4.6 l3,6 z" fill="#8c8c8c"/>
<path d="M1044,261.6 v-8.6 c0,-2 1,-2.6 2.6,-2.6 h6 v11.2 z" fill="none" stroke="#c4c4c4" stroke-width="1.1"/>
<path d="M1044.4,256.6 h8 v4.6 h-8 z" fill="#d4d4d4"/>
<path d="M1076.8,253 h10.4 M1076.8,256.5 h10.4 M1076.8,260 h10.4" stroke="#8a8a8a" stroke-width="1.9"/>
<rect x="936.9" y="272" width="125.2" height="17.6" rx="2.6" fill="#eaeaea" stroke="#d6d6d6" stroke-width="1"/>
<path d="M1051,279.6 h5.6 l-2.8,3.2 z" fill="#8a8a8a"/>
<defs><pattern id="ck" x="1072.4" y="272.6" width="6" height="6" patternUnits="userSpaceOnUse"><rect width="6" height="6" fill="#fafafa"/><rect width="3" height="3" fill="#e2e2e2"/><rect x="3" y="3" width="3" height="3" fill="#e2e2e2"/></pattern></defs>
<rect x="1072.4" y="272.6" width="18.4" height="17.4" rx="3" fill="url(#ck)" stroke="#d9d9d9" stroke-width="0.8"/>
</svg>
<div class="t" style="left:55.6px;top:205.2px;font-size:9.3px;color:#9c9c9c">Normal</div>
<div class="t" style="left:146.5px;top:206px;font-size:8.6px;color:#8a8a8a">100</div>
<!-- layers list -->
<div class="abs" style="left:157.4px;top:229px;width:13.6px;height:318px;background:#f1f1f1;border-left:1px solid #d6d6d6"></div>
<div class="abs" style="left:161px;top:230.4px;width:6px;height:330px;border-radius:3px;background:#c2c2c2"></div>
<div class="abs" style="left:0;top:286px;width:157px;height:1px;background:#d6d6d6"></div>
<div class="abs" style="left:0;top:343.6px;width:157px;height:1px;background:#d6d6d6"></div>
<div class="abs" style="left:0;top:517px;width:157px;height:1px;background:#d6d6d6"></div>
<div class="abs" style="left:1px;top:401.6px;width:156px;height:57.2px;background:#ebebeb;border:1px solid #3d8be0;outline:1px solid #9cc8f5;outline-offset:-2px"></div>
<div class="abs" style="left:128.6px;top:403px;width:1px;height:54.4px;background:#d2d2d2"></div>
<div class="abs" style="left:129px;top:430px;width:27px;height:1px;background:#d2d2d2"></div>
<div class="t" style="left:30px;top:270.4px;font-size:10.2px;color:#111;-webkit-text-stroke:0.25px #111">Layer5-1-1</div>
<div class="t" style="left:30px;top:328px;font-size:10.2px;color:#111;-webkit-text-stroke:0.25px #111">Layer5-1</div>
<div class="t" style="left:30px;top:385.6px;font-size:10.2px;color:#111;-webkit-text-stroke:0.25px #111">Layer5</div>
<div class="t" style="left:30px;top:443.4px;font-size:10.2px;color:#222">Layer6</div>
<div class="t" style="left:30px;top:501px;font-size:10.2px;color:#111;-webkit-text-stroke:0.25px #111">Layer3</div>
<svg style="left:0;top:229px" width="171" height="318" viewBox="928 300 171 318">
<defs>
<g id="eye"><path d="M-6.6,0 C-4,-4.6 4,-4.6 6.6,0 C4,4.6 -4,4.6 -6.6,0 Z" fill="none" stroke="#777" stroke-width="1.3"/><circle cx="0" cy="0" r="2.3" fill="#777"/></g>
<g id="rad"><circle cx="0" cy="0" r="4.4" fill="#e6e6e6" stroke="#d2d2d2" stroke-width="0.8"/></g>
</defs>
<use href="#eye" x="941.6" y="310.4"/><use href="#rad" x="941.6" y="345.2"/>
<use href="#eye" x="941.6" y="368"/><use href="#rad" x="941.6" y="403"/>
<use href="#eye" x="941.6" y="425.6"/><use href="#rad" x="941.6" y="460.6"/>
<use href="#rad" x="941.6" y="518.6"/>
<use href="#eye" x="941.6" y="541.4"/><use href="#rad" x="941.6" y="576.4"/>
<use href="#eye" x="941.6" y="599"/>
<!-- hidden eye layer6 -->
<path d="M935.6,484 C938,479.6 945.4,479.6 947.6,484 M937,489.4 L946.6,477.6 M935.6,484 C936.6,486 938,487 939.4,487.6 M944,487.4 C945.6,486.8 946.8,485.6 947.6,484" fill="none" stroke="#777" stroke-width="1"/>
<!-- stars -->
<path d="M978.6,305.2 Q980.6,318 992.2,325 Q980,328 973,338.6 Q971,326 959.2,319.6 Q971.6,316 978.6,305.2 Z" fill="#ffee00"/>
<path d="M975.8,363.8 Q979.6,376.6 992.6,380 Q979.6,383.6 975.8,396.4 Q972,383.6 959,380 Q972,376.6 975.8,363.8 Z" fill="#ffee00"/>
<path d="M975.8,421.4 Q979.6,434.2 992.6,437.6 Q979.6,441.2 975.8,454 Q972,441.2 959,437.6 Q972,434.2 975.8,421.4 Z" fill="#ffee00"/>
<!-- layer6 thumb -->
<g fill="none" stroke="#9a705a" stroke-width="0.9"><path d="M957.6,507 C953,496 955,485 964,484 C973,484 975.6,494 973,505"/><path d="M961,484.6 C964,482.6 968,482.6 970.6,484.6"/>
<path d="M981,505 C977,495 979,486 987,485.6 C996,485.6 998.6,494 996.4,504"/><path d="M984,485.6 C987,487.6 992,487.6 996,484.6"/></g>
<circle cx="1006" cy="500.6" r="6" fill="none" stroke="#666" stroke-width="1" stroke-dasharray="1.2,2.4"/>
<!-- layer6 controls -->
<path d="M1066.6,485.6 l4.4,-4.6 l4.4,4.6 z M1066.6,489.6 l4.4,4.6 l4.4,-4.6 z" fill="#666"/>
<path d="M1066,487.6 h10" stroke="#666" stroke-width="0.9"/>
<path d="M1068.6,512.6 v-2.6 c0,-3.4 5.4,-3.4 5.4,-0.6" fill="none" stroke="#a08a88" stroke-width="1"/>
<rect x="1067.4" y="512.6" width="8" height="6.6" fill="none" stroke="#a08a88" stroke-width="0.9"/>
<path d="M1067.4,515.9 h8 M1071.4,512.6 v6.6" stroke="#a08a88" stroke-width="0.7"/>
<!-- layer3 thumb -->
<g stroke="#ff2a2a" fill="none" stroke-width="0.8" opacity="0.85">
<path d="M966,555 h15" stroke="#b06a50" stroke-width="1"/>
<path d="M968,545 l3,-6 l1,6 M972,548 l2,5 M969,551 c3,-2 8,-2 11,0 M966,561 c3,4 12,4 16,0 M960,562 l2,4 M985,563 l3,4 M971,538 l1,3 M988,541 l2,-3 l1,4 M963,570 c2,3 5,3 7,2 M980,571 c2,1 4,0 5,-1"/>
<path d="M961,560 l1,2 M990,566 l1,2 M975,566 l1,1 M967,543 l1,1" stroke-width="1.4"/>
</g>
<!-- bottom layer thumb -->
<g transform="translate(926.6,576.8) scale(0.105)" fill="#82583f" stroke="#6e4026" stroke-width="7" stroke-linecap="round">
<ellipse cx="341" cy="324" rx="68.4" ry="116.3"/><ellipse cx="598.6" cy="324" rx="68.4" ry="116.3"/>
<path stroke="none" d="M352,252 C375,232 405,219 434,219 C452,219 466,228 472.5,245 C478,228 496,219 518,219 C545,219 566,232 584,250 L560,320 L380,320 Z"/>
<path fill="none" d="M472.5,245 C468,230 452,219.5 434,219.5 C404,219.5 374,233 354.5,250.3 C338,266 336,281 359,278 C338,291 321.5,322 321.3,330.3 C321,346 326,364 334.5,364 C345.5,364 348.6,352 348.4,339.5"/>
<path fill="none" d="M472.5,245 C477,230 496,219.5 518,219.5 C551,219.5 575,238.5 596.9,261 C605.5,273 592,281 581.5,278 C600,290 620,321 620.5,330.3 C621,346 616,364 607.6,364 C598.5,364 593.6,352 593.8,341"/>
<circle cx="468.2" cy="348.6" r="103.2"/>
</g>
</svg>
</div>
</body>
</html>
